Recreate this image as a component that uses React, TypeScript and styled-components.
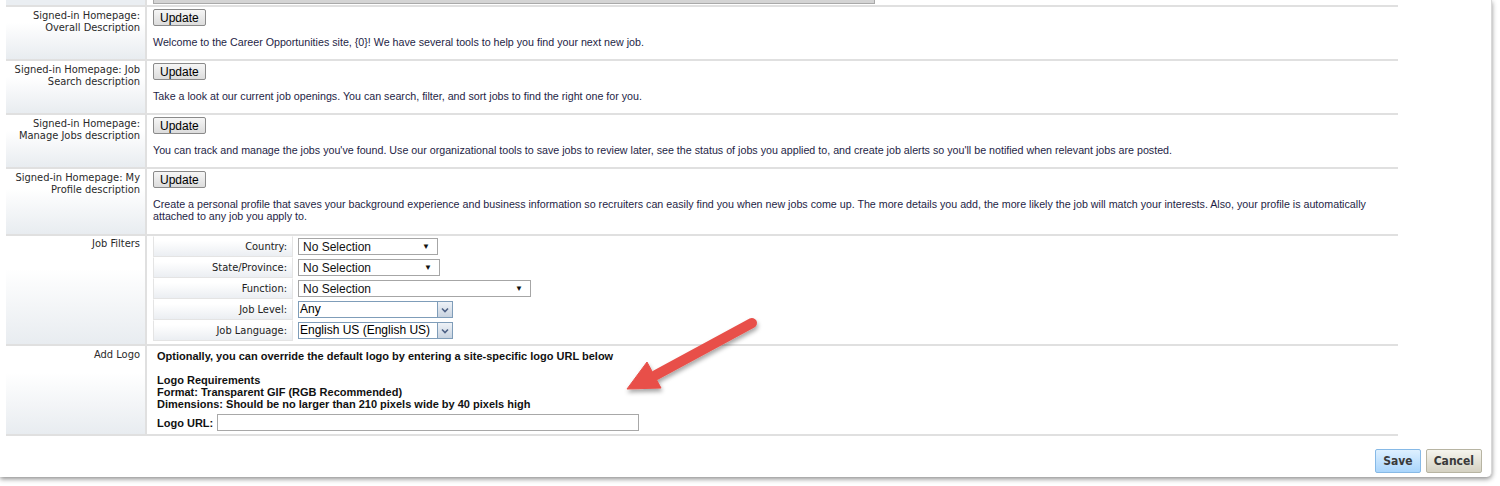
import React from 'react';
import styled, { createGlobalStyle } from 'styled-components';

const Global = createGlobalStyle`
  html, body { margin: 0; padding: 0; background: #fff; }
  body { font-family: "Liberation Sans", Arial, sans-serif; }
`;

const labelFont = `"DejaVu Sans Condensed", "Liberation Sans", Tahoma, sans-serif`;

const Page = styled.div`
  width: 1500px;
  height: 486px;
  overflow: hidden;
`;

const Panel = styled.div`
  position: relative;
  width: 1492px;
  height: 477px;
  box-sizing: border-box;
  padding-left: 6px;
  background: #fff;
  border-right: 1px solid #d8d8d8;
  border-bottom-right-radius: 5px;
  box-shadow: 0 2px 5px rgba(0, 0, 0, 0.45);
`;

const Table = styled.div`
  width: 1392px;
  display: flex;
  flex-direction: column;
`;

const Row = styled.div<{ $h: number }>`
  display: grid;
  grid-template-columns: 141px 1fr;
  height: ${(p) => p.$h}px;
  box-sizing: border-box;
  border-bottom: 2px solid #e0e0e0;
`;

const Label = styled.div<{ $pad?: number; $flat?: boolean }>`
  box-sizing: border-box;
  border-right: 2px solid #e0e0e0;
  background: ${(p) => (p.$flat ? '#eaeef2' : 'linear-gradient(#ffffff 30%, #e8ecf0)')};
  padding: ${(p) => p.$pad ?? 3}px 5px 0 4px;
  text-align: right;
  font-family: ${labelFont};
  font-size: 11px;
  line-height: 11.5px;
  color: #2a2a2a;
`;

const Cell = styled.div<{ $pad?: string }>`
  padding: ${(p) => p.$pad ?? '2px 6px 0'};
  min-width: 0;
`;

const ClippedBox = styled.div`
  width: 720px;
  height: 3px;
  background: #d4d4d4;
  border: 1px solid #a9a9a9;
  border-top: none;
`;

const UpdateButton = styled.button`
  display: block;
  height: 17px;
  padding: 0 6px;
  margin: 0;
  border: 1px solid #8a8a8a;
  border-radius: 2px;
  background: linear-gradient(#f6f6f6, #dcdcdc);
  font-family: "Liberation Sans", Arial, sans-serif;
  font-size: 12px;
  line-height: 14px;
  color: #000;
`;

const Desc = styled.p`
  margin: 10px 0 0;
  font-size: 10.7px;
  line-height: 12px;
  color: #1e1e46;
`;

const Filters = styled.div`
  display: grid;
  grid-template-columns: 140px 240px;
  grid-auto-rows: 21px;
  margin-top: -1px;
`;

const FilterLabel = styled.div`
  box-sizing: border-box;
  border: 1px solid #e4e4e4;
  border-top-color: #fff;
  background: linear-gradient(#ffffff 20%, #ebeef2);
  padding: 3px 5px 0 0;
  text-align: right;
  font-family: ${labelFont};
  font-size: 11px;
  line-height: 13px;
  color: #222;
`;

const FilterValue = styled.div`
  display: flex;
  align-items: center;
  padding-left: 5px;
`;

const SelectBox = styled.div<{ $w: number }>`
  display: flex;
  align-items: center;
  justify-content: space-between;
  box-sizing: border-box;
  width: ${(p) => p.$w}px;
  height: 17px;
  padding: 0 7px 0 4px;
  border: 1px solid #a6a6a6;
  background: #fff;
  font-size: 12px;
  color: #111;
  white-space: nowrap;
`;

const Caret = styled.span`
  font-size: 8px;
  color: #111;
`;

const ComboBox = styled.div`
  display: flex;
  height: 17px;
`;

const ComboText = styled.div<{ $w: number }>`
  box-sizing: border-box;
  width: ${(p) => p.$w}px;
  height: 17px;
  padding-left: 1px;
  border: 1px solid #7f9db9;
  border-right: none;
  font-size: 12px;
  line-height: 15px;
  color: #000;
  white-space: nowrap;
  overflow: hidden;
`;

const ComboButton = styled.div`
  box-sizing: border-box;
  width: 16px;
  height: 17px;
  border: 1px solid #7f9db9;
  background: linear-gradient(#eef2f7, #c8d3e0);
  display: flex;
  align-items: center;
  justify-content: center;
`;

const LogoText = styled.div`
  font-size: 11px;
  line-height: 12px;
  font-weight: bold;
  color: #111;
`;

const Gap = styled.div`
  height: 12px;
`;

const UrlRow = styled.div`
  display: flex;
  align-items: center;
  gap: 4px;
  margin-top: 4px;
`;

const UrlInput = styled.div`
  box-sizing: border-box;
  width: 422px;
  height: 17px;
  border: 1px solid #a8a8a8;
  background: #fff;
`;

const Footer = styled.div`
  display: flex;
  justify-content: flex-end;
  gap: 5px;
  padding: 13px 9px 0 0;
`;

const FooterButton = styled.button<{ $primary?: boolean }>`
  height: 24px;
  padding: 0 7px;
  margin: 0;
  border: 1px solid ${(p) => (p.$primary ? '#86b9e6' : '#b7b4a2')};
  border-radius: 2px;
  background: ${(p) =>
    p.$primary ? 'linear-gradient(#def0ff, #a9d5fc)' : 'linear-gradient(#f6f5ee, #d4d1c2)'};
  font-family: ${labelFont};
  font-size: 12px;
  font-weight: bold;
  color: #3a3a3a;
`;

const ArrowSvg = styled.svg`
  position: absolute;
  left: 0;
  top: 0;
  pointer-events: none;
  overflow: visible;
`;

const Chevron = () => (
  <svg width="8" height="6" viewBox="0 0 8 6">
    <path d="M1 1.5 L4 4.5 L7 1.5" fill="none" stroke="#4d6185" strokeWidth="1.6" />
  </svg>
);

const descRows = [
  {
    label: ['Signed-in Homepage:', 'Overall Description'],
    text: 'Welcome to the Career Opportunities site, {0}! We have several tools to help you find your next new job.',
    h: 54,
  },
  {
    label: ['Signed-in Homepage: Job', 'Search description'],
    text: 'Take a look at our current job openings. You can search, filter, and sort jobs to find the right one for you.',
    h: 54,
  },
  {
    label: ['Signed-in Homepage:', 'Manage Jobs description'],
    text: "You can track and manage the jobs you've found. Use our organizational tools to save jobs to review later, see the status of jobs you applied to, and create job alerts so you'll be notified when relevant jobs are posted.",
    h: 54,
  },
  {
    label: ['Signed-in Homepage: My', 'Profile description'],
    text: 'Create a personal profile that saves your background experience and business information so recruiters can easily find you when new jobs come up. The more details you add, the more likely the job will match your interests. Also, your profile is automatically attached to any job you apply to.',
    h: 67,
  },
];

export default function App() {
  return (
    <Page>
      <Global />
      <Panel>
        <Table>
          <Row $h={7}>
            <Label $flat />
            <Cell $pad="0 6px">
              <ClippedBox />
            </Cell>
          </Row>
          {descRows.map((r) => (
            <Row key={r.label[0] + r.label[1]} $h={r.h}>
              <Label>
                {r.label[0]}
                <br />
                {r.label[1]}
              </Label>
              <Cell>
                <UpdateButton>Update</UpdateButton>
                <Desc>{r.text}</Desc>
              </Cell>
            </Row>
          ))}
          <Row $h={110}>
            <Label $pad={2}>Job Filters</Label>
            <Cell $pad="1px 6px 0">
              <Filters>
                <FilterLabel>Country:</FilterLabel>
                <FilterValue>
                  <SelectBox $w={140}>
                    No Selection<Caret>▼</Caret>
                  </SelectBox>
                </FilterValue>
                <FilterLabel>State/Province:</FilterLabel>
                <FilterValue>
                  <SelectBox $w={142}>
                    No Selection<Caret>▼</Caret>
                  </SelectBox>
                </FilterValue>
                <FilterLabel>Function:</FilterLabel>
                <FilterValue>
                  <SelectBox $w={233}>
                    No Selection<Caret>▼</Caret>
                  </SelectBox>
                </FilterValue>
                <FilterLabel>Job Level:</FilterLabel>
                <FilterValue>
                  <ComboBox>
                    <ComboText $w={139}>Any</ComboText>
                    <ComboButton>
                      <Chevron />
                    </ComboButton>
                  </ComboBox>
                </FilterValue>
                <FilterLabel>Job Language:</FilterLabel>
                <FilterValue>
                  <ComboBox>
                    <ComboText $w={139}>English US (English US)</ComboText>
                    <ComboButton>
                      <Chevron />
                    </ComboButton>
                  </ComboBox>
                </FilterValue>
              </Filters>
            </Cell>
          </Row>
          <Row $h={90}>
            <Label $pad={3}>Add Logo</Label>
            <Cell $pad="4px 10px 0">
              <LogoText>
                Optionally, you can override the default logo by entering a site-specific logo URL below
              </LogoText>
              <Gap />
              <LogoText>Logo Requirements</LogoText>
              <LogoText>Format: Transparent GIF (RGB Recommended)</LogoText>
              <LogoText>Dimensions: Should be no larger than 210 pixels wide by 40 pixels high</LogoText>
              <UrlRow>
                <LogoText>Logo URL:</LogoText>
                <UrlInput />
              </UrlRow>
            </Cell>
          </Row>
        </Table>
        <Footer>
          <FooterButton $primary>Save</FooterButton>
          <FooterButton>Cancel</FooterButton>
        </Footer>
        <ArrowSvg width="1492" height="477">
          <defs>
            <filter id="arrowShadow" x="-20%" y="-20%" width="140%" height="140%">
              <feDropShadow dx="1" dy="3" stdDeviation="2" floodColor="#000" floodOpacity="0.35" />
            </filter>
          </defs>
          <g filter="url(#arrowShadow)" fill="#e8504a" stroke="#e8504a">
            <line x1="752" y1="323" x2="656" y2="375" strokeWidth="10" strokeLinecap="round" />
            <polygon points="627,389 647,362 661,388" strokeWidth="1" strokeLinejoin="round" />
          </g>
        </ArrowSvg>
      </Panel>
    </Page>
  );
}
